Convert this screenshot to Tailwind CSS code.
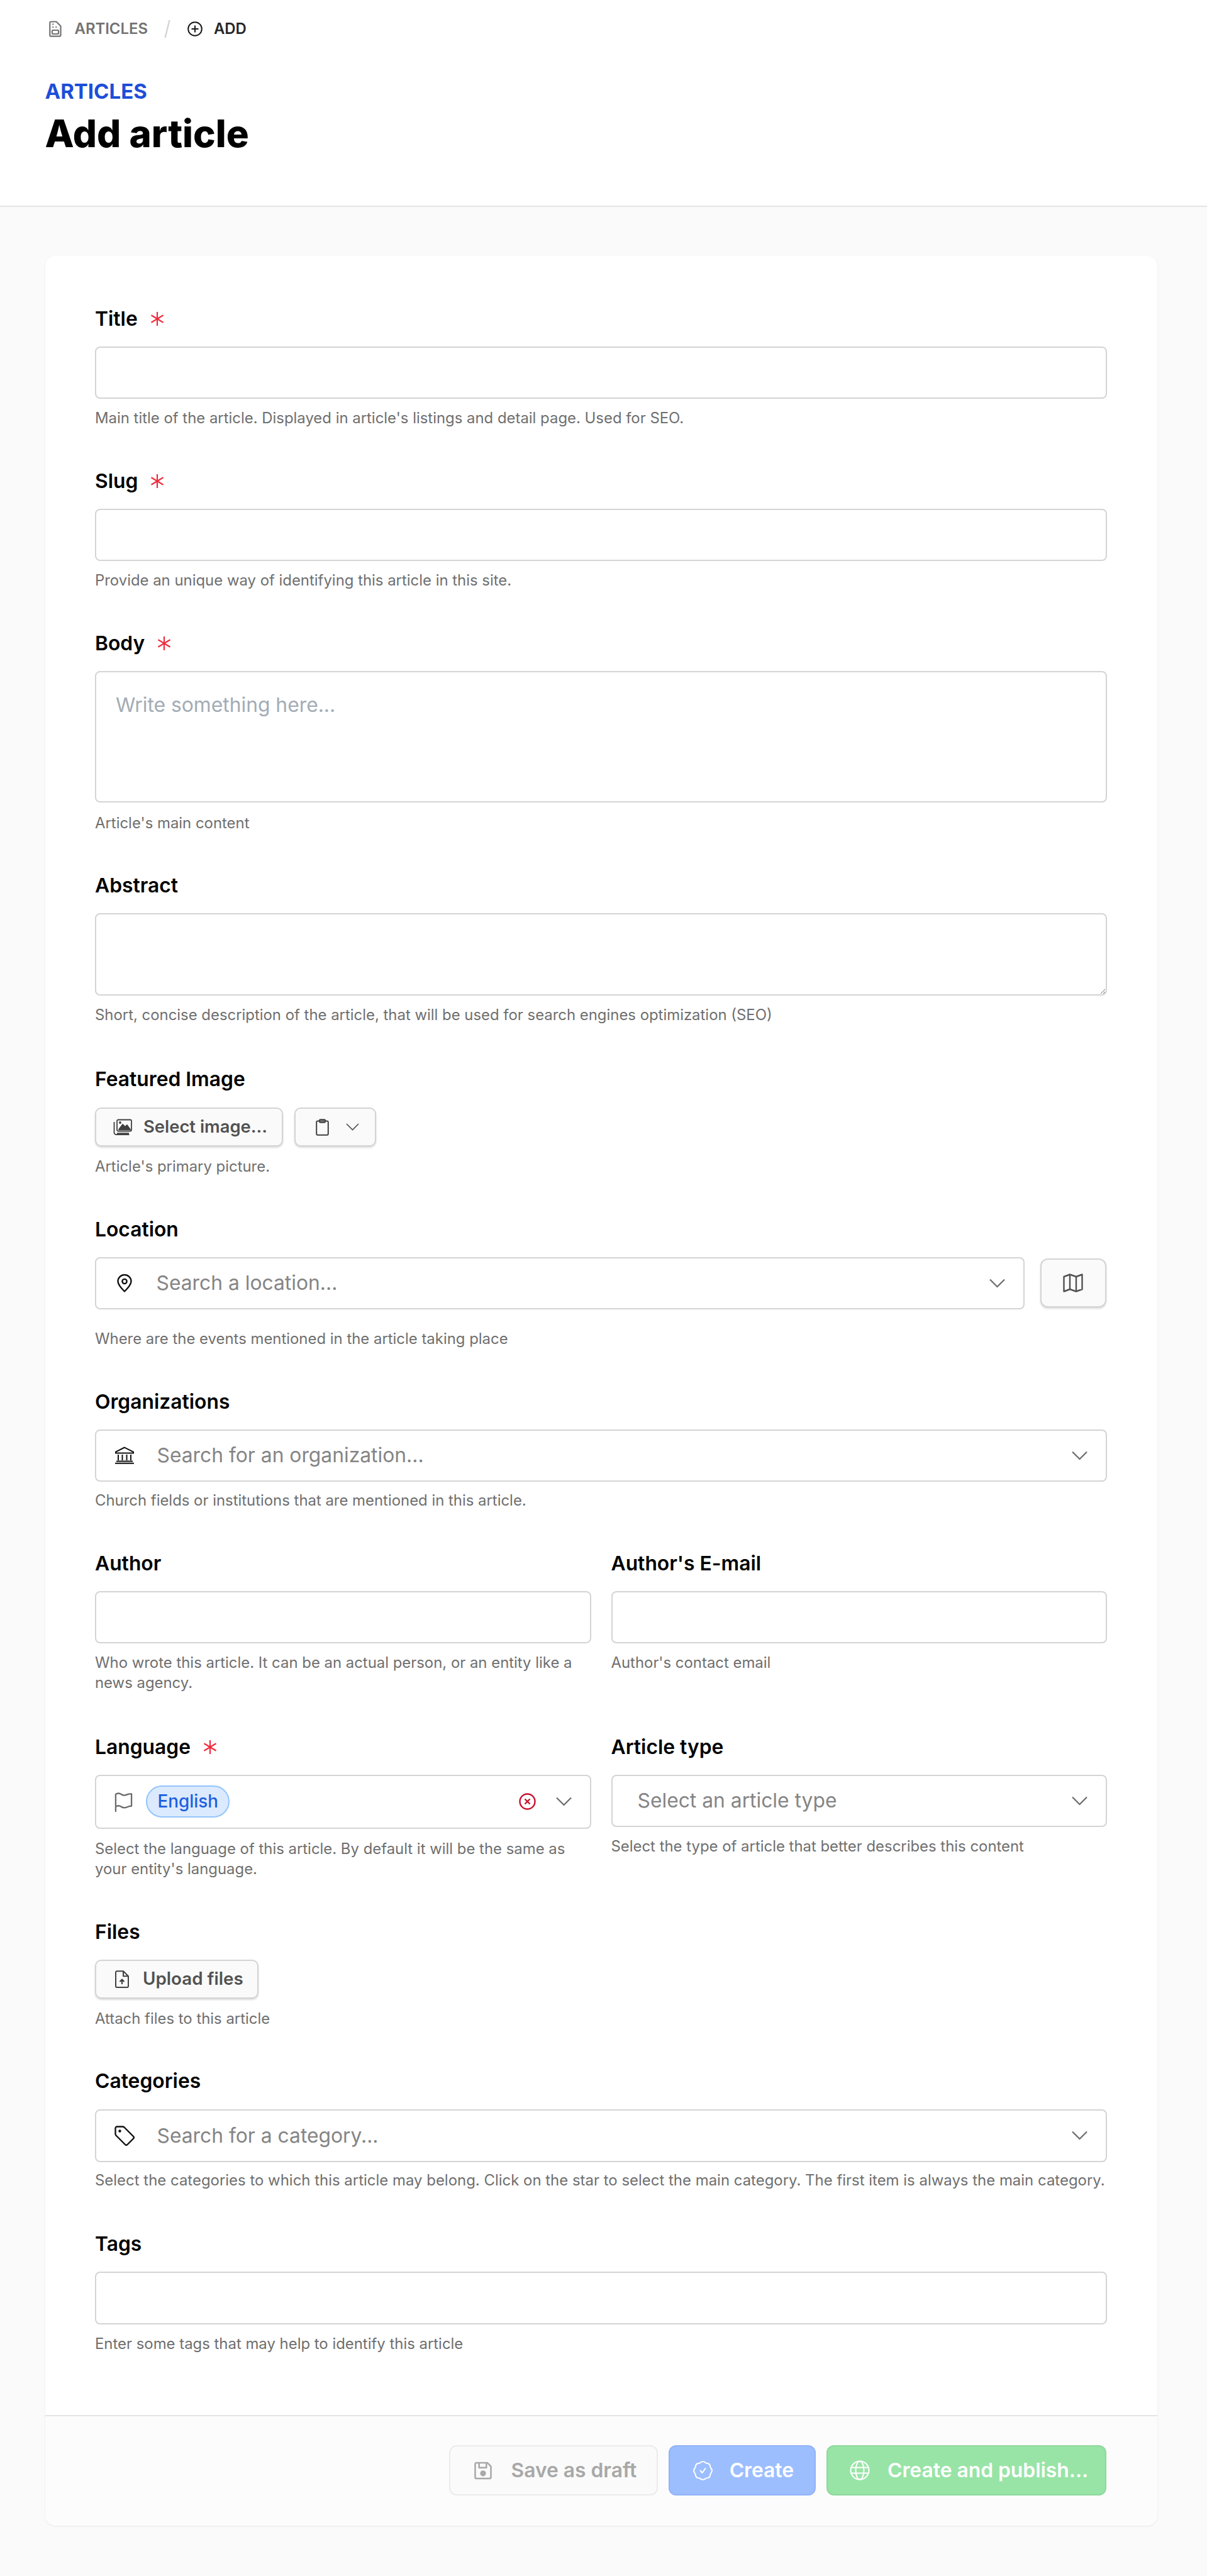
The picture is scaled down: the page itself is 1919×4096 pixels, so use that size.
<!DOCTYPE html>
<html lang="en">
<head>
<meta charset="utf-8">
<title>Add article</title>
<script src="https://cdn.jsdelivr.net/npm/@tailwindcss/browser@4"></script>
</head>
<body class="bg-[#fafafa] [font-family:Inter,sans-serif] text-black">
<div class="w-[1919px] h-[4096px] overflow-hidden">
  <header class="bg-white border-b-2 border-[#e5e5e5] h-[329px] pl-[71.5px] pt-[30px]">
    <nav class="flex items-center h-[32px] text-[23.9px] font-semibold">
      <svg class="w-[20px] h-[26px] ml-[6px] text-[#737373]" viewBox="0 0 20 26" fill="none" stroke="currentColor" stroke-width="2.2" stroke-linejoin="round" stroke-linecap="round"><path d="M3 1.5h8.5l7 7V23a1.7 1.7 0 0 1-1.7 1.7H3A1.7 1.7 0 0 1 1.3 23V3.2A1.7 1.7 0 0 1 3 1.5z"/><rect x="5" y="15" width="10" height="6" rx="1"/><path d="M6 5.5h.5M6 10h.5M11 10h.5"/></svg>
      <span class="ml-[21px] text-[#737373]">ARTICLES</span>
      <svg class="w-[10px] h-[30px] ml-[26px]" viewBox="0 0 10 30" fill="none" stroke="#d4d4d4" stroke-width="2.4"><path d="M8.5 1 1.5 29"/></svg>
      <svg class="w-[24px] h-[24px] ml-[27px] text-[#171717]" viewBox="0 0 24 24" fill="none" stroke="currentColor" stroke-width="2"><circle cx="12" cy="12" r="10.8"/><path d="M12 6.5v11M6.5 12h11"/></svg>
      <span class="ml-[18px] text-[#262626]">ADD</span>
    </nav>
    <div class="mt-[64px] h-[40px] flex items-center text-[33px] font-bold text-[#1d4ed8]">ARTICLES</div>
    <h1 class="mt-[8px] h-[76px] flex items-center text-[60px] font-extrabold leading-none">Add article</h1>
  </header>

  <main class="pl-[71.5px] pr-[79.5px] pt-[78px]">
    <div class="bg-white rounded-[16px] shadow-[0_1px_3px_rgba(0,0,0,0.08)] w-[1768px] h-[3609px] flex flex-col">
      <form class="px-[79.5px] pt-[79.5px] flex flex-col gap-[63.5px] h-[3432.5px]">

        <div>
          <label class="flex items-center gap-[20px] h-[40px] text-[31.8px] font-semibold">Title
            <svg class="w-[22px] h-[24px]" viewBox="0 0 22 24" fill="none" stroke="#ef2b3c" stroke-width="2.2"><path d="M11 1v22M1.5 6.2l19 11.6M20.5 6.2l-19 11.6"/></svg></label>
          <input type="text" class="block mt-[24px] w-full h-[83.5px] bg-white border-2 border-[#d4d4d4] rounded-[8px]">
          <p class="mt-[15px] h-[32px] leading-[32px] text-[23.9px] text-[#6f6f6f]">Main title of the article. Displayed in article's listings and detail page. Used for SEO.</p>
        </div>

        <div>
          <label class="flex items-center gap-[20px] h-[40px] text-[31.8px] font-semibold">Slug
            <svg class="w-[22px] h-[24px]" viewBox="0 0 22 24" fill="none" stroke="#ef2b3c" stroke-width="2.2"><path d="M11 1v22M1.5 6.2l19 11.6M20.5 6.2l-19 11.6"/></svg></label>
          <input type="text" class="block mt-[24px] w-full h-[83.5px] bg-white border-2 border-[#d4d4d4] rounded-[8px]">
          <p class="mt-[15px] h-[32px] leading-[32px] text-[23.9px] text-[#6f6f6f]">Provide an unique way of identifying this article in this site.</p>
        </div>

        <div>
          <label class="flex items-center gap-[20px] h-[40px] text-[31.8px] font-semibold">Body
            <svg class="w-[22px] h-[24px]" viewBox="0 0 22 24" fill="none" stroke="#ef2b3c" stroke-width="2.2"><path d="M11 1v22M1.5 6.2l19 11.6M20.5 6.2l-19 11.6"/></svg></label>
          <div class="mt-[24.5px] h-[209px] border-2 border-[#d4d4d4] rounded-[8px] px-[31px] pt-[30px] text-[31.8px] leading-[44px] text-[#a3acb5]">Write something here...</div>
          <p class="mt-[16.5px] h-[32px] leading-[32px] text-[23.9px] text-[#6f6f6f]">Article's main content</p>
        </div>

        <div>
          <label class="flex items-center h-[40px] text-[31.8px] font-semibold">Abstract</label>
          <textarea class="block mt-[24px] w-full h-[131px] border-2 border-[#d4d4d4] rounded-[8px]"></textarea>
          <p class="mt-[15px] h-[32px] leading-[32px] text-[23.9px] text-[#6f6f6f]">Short, concise description of the article, that will be used for search engines optimization (SEO)</p>
        </div>

        <div class="mt-[2.5px]">
          <label class="flex items-center h-[40px] text-[31.8px] font-semibold">Featured Image</label>
          <div class="mt-[25px] flex gap-[18px]">
            <button type="button" class="w-[299px] h-[62px] flex items-center pl-[27px] bg-[#fafafa] border-2 border-[#d4d4d4] rounded-[10px] shadow-[0_2px_3px_rgba(0,0,0,0.15)] text-[27.4px] font-semibold text-[#525252]">
              <svg class="w-[30px] h-[26px] shrink-0" viewBox="0 0 30 26" fill="none" stroke="#404040" stroke-width="1.8" stroke-linejoin="round"><path d="M1.5 5v17a3 3 0 0 0 3 3h21"/><rect x="6" y="1.5" width="23" height="18" rx="2"/><path d="M9 17l6-8 4 4 3-3 5 7z" fill="#404040"/><circle cx="11" cy="6" r="1" fill="#404040"/><path d="M6 23h19" /></svg>
              <span class="ml-[18px]">Select image...</span>
            </button>
            <button type="button" class="w-[130px] h-[62px] flex items-center pl-[32px] bg-[#fafafa] border-2 border-[#d4d4d4] rounded-[10px] shadow-[0_2px_3px_rgba(0,0,0,0.15)]">
              <svg class="w-[21px] h-[27px]" viewBox="0 0 21 27" fill="none" stroke="#404040" stroke-width="2" stroke-linejoin="round"><rect x="1.2" y="3.5" width="18.6" height="22.3" rx="2"/><rect x="6" y="1.2" width="9" height="4.5" rx="1.2"/></svg>
              <svg class="w-[21px] h-[12px] ml-[27px]" viewBox="0 0 21 12" fill="none" stroke="#525252" stroke-width="1.7"><path d="M1 1l9.5 9.5L20 1"/></svg>
            </button>
          </div>
          <p class="mt-[16px] h-[32px] leading-[32px] text-[23.9px] text-[#6f6f6f]">Article's primary picture.</p>
        </div>

        <div>
          <label class="flex items-center h-[40px] text-[31.8px] font-semibold">Location</label>
          <div class="mt-[24px] flex items-center gap-[24.5px]">
            <div class="w-[1478px] h-[83.5px] flex items-center border-2 border-[#d4d4d4] rounded-[8px] pl-[33px] pr-[29px]">
              <svg class="w-[24px] h-[29px] shrink-0" viewBox="0 0 24 29" fill="none" stroke="#111" stroke-width="2.4" stroke-linejoin="round"><path d="M12 27.5C5 20.5 1.5 15.8 1.5 11.5a10.5 10.5 0 0 1 21 0c0 4.300-3.500 9-10.500 16z"/><circle cx="12" cy="11.500" r="3.600"/></svg>
              <span class="ml-[38.5px] text-[31.8px] text-[#858585]">Search a location...</span>
              <svg class="ml-auto w-[25px] h-[15px]" viewBox="0 0 25 15" fill="none" stroke="#6b6b6b" stroke-width="2.200"><path d="M1 1.500l11.500 11.500L24 1.500"/></svg>
            </div>
            <button type="button" class="w-[105.5px] h-[78px] flex items-center justify-center bg-[#fafafa] border-2 border-[#d4d4d4] rounded-[12px] shadow-[0_2px_3px_rgba(0,0,0,0.15)]">
              <svg class="w-[32px] h-[30px]" viewBox="0 0 32 30" fill="none" stroke="#525252" stroke-width="2.400" stroke-linejoin="round"><path d="M1.500 5v23.500l9.500-3.500 10 3.500 9.500-3.500V1.500L21 5 11 1.500z"/><path d="M11 1.500V25M21 5v23.500"/></svg>
            </button>
          </div>
          <p class="mt-[31px] h-[32px] leading-[32px] text-[23.9px] text-[#6f6f6f]">Where are the events mentioned in the article taking place</p>
        </div>

        <div>
          <label class="flex items-center h-[40px] text-[31.8px] font-semibold">Organizations</label>
          <div class="mt-[24px] h-[83.5px] flex items-center border-2 border-[#d4d4d4] rounded-[8px] pl-[29px] pr-[29px]">
            <svg class="w-[32px] h-[28px] shrink-0" viewBox="0 0 32 28" fill="none" stroke="#111" stroke-width="2"><path d="M16 1.500 2 8.500v2h28v-2zM6 13v9M12.500 13v9M19.500 13v9M26 13v9M3 23.500h26M1 26.800h30"/></svg>
            <span class="ml-[35.5px] text-[31.8px] text-[#858585]">Search for an organization...</span>
            <svg class="ml-auto w-[25px] h-[15px]" viewBox="0 0 25 15" fill="none" stroke="#6b6b6b" stroke-width="2.200"><path d="M1 1.500l11.500 11.500L24 1.500"/></svg>
          </div>
          <p class="mt-[14px] h-[32px] leading-[32px] text-[23.9px] text-[#6f6f6f]">Church fields or institutions that are mentioned in this article.</p>
        </div>

        <div class="grid grid-cols-2 gap-x-[32px]">
          <div>
            <label class="flex items-center h-[40px] text-[31.8px] font-semibold">Author</label>
            <input type="text" class="block mt-[24px] w-full h-[83.5px] border-2 border-[#d4d4d4] rounded-[8px]">
            <p class="mt-[15px] leading-[32px] text-[23.9px] text-[#6f6f6f]">Who wrote this article. It can be an actual person, or an entity like a news agency.</p>
          </div>
          <div>
            <label class="flex items-center h-[40px] text-[31.8px] font-semibold">Author's E-mail</label>
            <input type="text" class="block mt-[24px] w-full h-[83.5px] border-2 border-[#d4d4d4] rounded-[8px]">
            <p class="mt-[15px] leading-[32px] text-[23.9px] text-[#6f6f6f]">Author's contact email</p>
          </div>
        </div>

        <div class="grid grid-cols-2 gap-x-[32px] mt-[2px]">
          <div>
            <label class="flex items-center gap-[20px] h-[40px] text-[31.8px] font-semibold">Language
              <svg class="w-[22px] h-[24px]" viewBox="0 0 22 24" fill="none" stroke="#ef2b3c" stroke-width="2.2"><path d="M11 1v22M1.5 6.2l19 11.6M20.5 6.2l-19 11.6"/></svg></label>
            <div class="mt-[24px] h-[86px] flex items-center border-2 border-[#d4d4d4] rounded-[8px] pl-[29px] pr-[29px]">
              <svg class="w-[29px] h-[32px] shrink-0" viewBox="0 0 30 33" fill="none" stroke="#6b6b6b" stroke-width="2.400" stroke-linejoin="round" stroke-linecap="round"><path d="M2 32V4c3-2 6-2 9 0s7 2 10 .5 5-1 7-1v20c-2 0-4 0-7 1.500s-7 1.500-10-.500-6-2-9 0"/></svg>
              <span class="ml-[21px] h-[51px] px-[16.5px] flex items-center rounded-full bg-[#dbeafe] border-2 border-[#93c5fd] text-[27.8px] font-medium text-[#1d5fe0]">English</span>
              <svg class="ml-auto w-[27px] h-[27px] shrink-0" viewBox="0 0 27 27" fill="none" stroke="#c8102e" stroke-width="2.400"><circle cx="13.500" cy="13.500" r="12"/><path d="M9.500 9.500l8 8M17.500 9.500l-8 8"/></svg>
              <svg class="ml-[32px] w-[25px] h-[15px] shrink-0" viewBox="0 0 25 15" fill="none" stroke="#6b6b6b" stroke-width="2.200"><path d="M1 1.500l11.500 11.500L24 1.500"/></svg>
            </div>
            <p class="mt-[16.5px] leading-[32px] text-[23.9px] text-[#6f6f6f]">Select the language of this article. By default it will be the same as your entity's language.</p>
          </div>
          <div>
            <label class="flex items-center h-[40px] text-[31.8px] font-semibold">Article type</label>
            <div class="mt-[24px] h-[83.5px] flex items-center border-2 border-[#d4d4d4] rounded-[8px] pl-[40px] pr-[29px]">
              <span class="text-[31.8px] text-[#858585]">Select an article type</span>
              <svg class="ml-auto w-[25px] h-[15px]" viewBox="0 0 25 15" fill="none" stroke="#6b6b6b" stroke-width="2.200"><path d="M1 1.500l11.500 11.500L24 1.500"/></svg>
            </div>
            <p class="mt-[15px] leading-[32px] text-[23.9px] text-[#6f6f6f]">Select the type of article that better describes this content</p>
          </div>
        </div>

        <div>
          <label class="flex items-center h-[40px] text-[31.8px] font-semibold">Files</label>
          <button type="button" class="mt-[24px] w-[260px] h-[62.500px] flex items-center pl-[30px] bg-[#fafafa] border-2 border-[#d4d4d4] rounded-[10px] shadow-[0_2px_3px_rgba(0,0,0,0.15)] text-[27.8px] font-semibold text-[#525252]">
            <svg class="w-[22px] h-[28px] shrink-0" viewBox="0 0 22 28" fill="none" stroke="#404040" stroke-width="2" stroke-linejoin="round"><path d="M3 1.200h10l8 8V25a2 2 0 0 1-2 2H3a2 2 0 0 1-2-2V3.200a2 2 0 0 1 2-2zM13 1.200v8h8"/><path d="M11 22v-7M7.500 18l3.500-3.500 3.500 3.500" stroke-width="2.200"/></svg>
            <span class="ml-[22px]">Upload files</span>
          </button>
          <p class="mt-[15.7px] h-[32px] leading-[32px] text-[23.9px] text-[#6f6f6f]">Attach files to this article</p>
        </div>

        <div>
          <label class="flex items-center h-[40px] text-[31.8px] font-semibold">Categories</label>
          <div class="mt-[25px] h-[83.5px] flex items-center border-2 border-[#d4d4d4] rounded-[8px] pl-[29px] pr-[29px]">
            <svg class="w-[32px] h-[32px] shrink-0" viewBox="0 0 32 32" fill="none" stroke="#111" stroke-width="2.400" stroke-linejoin="round"><path d="M4 1.500h9c1 0 1.800.4 2.500 1L30 17c1 1 1 2.500 0 3.500L20.500 30c-1 1-2.500 1-3.500 0L2.500 15.500c-.6-.7-1-1.500-1-2.500V4A2.500 2.500 0 0 1 4 1.500z"/><circle cx="8.500" cy="8.500" r="1" fill="#111"/></svg>
            <span class="ml-[35.5px] text-[31.8px] text-[#858585]">Search for a category...</span>
            <svg class="ml-auto w-[25px] h-[15px]" viewBox="0 0 25 15" fill="none" stroke="#6b6b6b" stroke-width="2.200"><path d="M1 1.500l11.500 11.500L24 1.500"/></svg>
          </div>
          <p class="mt-[13px] h-[32px] leading-[32px] text-[23.95px] text-[#6f6f6f] whitespace-nowrap">Select the categories to which this article may belong. Click on the star to select the main category. The first item is always the main category.</p>
        </div>

        <div class="mt-[2px]">
          <label class="flex items-center h-[40px] text-[31.8px] font-semibold">Tags</label>
          <input type="text" class="block mt-[24px] w-full h-[83.5px] border-2 border-[#d4d4d4] rounded-[8px]">
          <p class="mt-[15px] h-[32px] leading-[32px] text-[23.9px] text-[#6f6f6f]">Enter some tags that may help to identify this article</p>
        </div>
      </form>

      <footer class="flex-1 border-t-2 border-[#e5e5e5] bg-[#fcfcfc] rounded-b-[16px] flex justify-end items-center gap-[17.25px] pr-[80.5px] pb-[1px] text-[31.8px] font-semibold">
        <button type="button" class="w-[332px] h-[80px] flex items-center pl-[37.7px] bg-[#fafafa] border-2 border-[#ebebeb] rounded-[12px] text-[#a8a8a8]">
          <svg class="w-[28px] h-[29px] shrink-0" viewBox="0 0 29 29" fill="none" stroke="#a8a8a8" stroke-width="2.600" stroke-linejoin="round"><path d="M3.500 1.500h18l6 6v18a2 2 0 0 1-2 2h-22a2 2 0 0 1-2-2v-22a2 2 0 0 1 2-2z"/><path d="M8 1.500v8h12v-8"/><circle cx="14.500" cy="19" r="3.500" fill="#a8a8a8"/></svg>
          <span class="ml-[30.8px] whitespace-nowrap">Save as draft</span>
        </button>
        <button type="button" class="w-[233.5px] h-[80px] flex items-center pl-[36.7px] bg-[#9cbeff] border-2 border-[#92b3f9] rounded-[12px] text-white">
          <svg class="w-[31px] h-[31px] shrink-0" viewBox="0 0 31 31" fill="none" stroke="#fff" stroke-width="2" stroke-linejoin="round"><path d="M27.500 10.500Q32.500 15.500 27.500 20.500Q27.500 27.500 20.500 27.500Q15.500 32.500 10.500 27.500Q3.500 27.500 3.500 20.500Q-1.500 15.500 3.500 10.500Q3.500 3.500 10.500 3.500Q15.500 -1.500 20.500 3.500Q27.500 3.500 27.500 10.500z"/><path d="M11.500 15.500l3 3.500 5-7" stroke-linecap="round"/></svg>
          <span class="ml-[26.7px]">Create</span>
        </button>
        <button type="button" class="w-[445px] h-[80px] flex items-center pl-[35px] bg-[#98e4a6] border-2 border-[#8ed89d] rounded-[12px] text-white">
          <svg class="w-[32px] h-[32px] shrink-0" viewBox="0 0 32 32" fill="none" stroke="#fff" stroke-width="2"><circle cx="16" cy="16" r="14.500"/><ellipse cx="16" cy="16" rx="6.500" ry="14.500"/><path d="M2 11.500h28M2 20.500h28"/></svg>
          <span class="ml-[28px] whitespace-nowrap">Create and publish...</span>
        </button>
      </footer>
    </div>
  </main>
</div>
</body>
</html>
